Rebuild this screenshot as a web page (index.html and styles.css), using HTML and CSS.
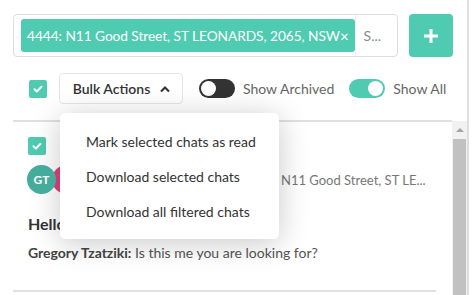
FILE: index.html
```html
<!DOCTYPE html>
<html>
<head>
<meta charset="utf-8">
<link rel="stylesheet" href="styles.css">
</head>
<body>
<div class="page">
  <div class="main">
    <div class="top">
      <div class="search">
        <span class="tag">4444: N11 Good Street, ST LEONARDS, 2065, NSW<span class="x">×</span></span>
        <span class="ph">S...</span>
      </div>
      <button class="add"><svg width="18" height="18" viewBox="0 0 18 18"><path d="M9 2v14M2 9h14" stroke="#fff" stroke-width="3" fill="none"/></svg></button>
    </div>
    <div class="controls">
      <span class="cb"><svg width="12" height="12" viewBox="0 0 12 12"><path d="M2.5 6.2l2.4 2.3 4.6-4.8" stroke="#fff" stroke-width="2" fill="none" stroke-linecap="round" stroke-linejoin="round"/></svg></span>
      <button class="bulk">Bulk Actions <svg width="12" height="8" viewBox="0 0 12 8"><path d="M2 6.5l4-4 4 4" stroke="#333" stroke-width="2" fill="none"/></svg></button>
      <span class="toggle dark"><span class="knob"></span></span>
      <span class="lbl">Show Archived</span>
      <span class="toggle on"><span class="knob"></span></span>
      <span class="lbl">Show All</span>
    </div>
    <div class="list">
      <div class="items">
        <div class="item">
          <span class="cb"><svg width="12" height="12" viewBox="0 0 12 12"><path d="M2.5 6.2l2.4 2.3 4.6-4.8" stroke="#fff" stroke-width="2" fill="none" stroke-linecap="round" stroke-linejoin="round"/></svg></span>
          <div class="meta">
            <div class="avatars"><span class="av gt">GT</span><span class="av pk"></span></div>
            <span class="addr">N11 Good Street, ST LE...</span>
          </div>
          <div class="subject">Hello</div>
          <div class="msg"><b>Gregory Tzatziki:</b> Is this me you are looking for?</div>
        </div>
      </div>
      <div class="scroll"><span class="up"></span><span class="thumb"></span></div>
    </div>
    <div class="menu">
      <div class="mi">Mark selected chats as read</div>
      <div class="mi">Download selected chats</div>
      <div class="mi">Download all filtered chats</div>
    </div>
  </div>
  <div class="edge"></div>
</div>
</body>
</html>
```
FILE: styles.css
```css
* { box-sizing: border-box; }
html, body { margin: 0; padding: 0; background: #fff; }
body { font-family: Lato, "Open Sans", sans-serif; color: #333; font-size: 14px; }
.page { display: flex; height: 295px; overflow: hidden; width: 472px; }
.main { position: relative; width: 467px; padding-left: 13px; }
.edge { width: 2px; background: #dedede; height: 295px; }
.top { display: flex; margin-top: 14px; height: 43px; gap: 11px; width: 440px; }
.search { flex: 1; border: 1px solid #ddd; border-radius: 4px; display: flex; align-items: center; padding-left: 7px; }
.tag { background: #4fcbb1; color: #fff; height: 33px; border-radius: 3px; display: flex; align-items: center; padding: 0 6px 0 6px; font-size: 13.7px; white-space: nowrap; letter-spacing: -0.05px; }
.tag .x { margin-left: 0; font-size: 15px; }
.ph { color: #888; margin-left: 0; padding-left: 8px; height: 41px; display: flex; align-items: center; border-left: 1px solid #eee; }
.add { width: 44px; height: 43px; border: 0; border-radius: 4px; background: #4fcbb1; display: flex; align-items: center; justify-content: center; padding: 0; }
.controls { display: flex; align-items: center; margin-top: 16px; height: 31px; padding-left: 16px; }
.cb { width: 18px; height: 18px; border-radius: 2px; background: #4fcbb1; display: inline-flex; align-items: center; justify-content: center; flex: none; }
.bulk { margin-left: 12px; height: 31px; width: 124px; border: 1px solid #e6e6e6; border-radius: 4px; background: #fff; font-family: inherit; font-size: 14px; font-weight: 600; color: #333; display: flex; align-items: center; justify-content: center; gap: 9px; padding: 0 0 0 2px; }
.toggle { width: 36px; height: 19px; border-radius: 10px; position: relative; margin-left: 16px; flex: none; }
.toggle .knob { position: absolute; top: 2px; width: 15px; height: 15px; border-radius: 50%; background: #fff; }
.toggle.dark { background: #333; }
.toggle.dark .knob { left: 2px; }
.toggle.on { background: #4fcbb1; margin-left: 15px; }
.toggle.on .knob { right: 2px; }
.lbl { color: #666; margin-left: 8px; font-size: 14px; }
.list { display: flex; margin-top: 16px; width: 454px; height: 175px; }
.items { flex: 1; border-top: 2px solid #e0e0e0; }
.item { margin-right: 16px; border-bottom: 2px solid #e0e0e0; padding: 15px 0 0 15px; height: 170px; }
.meta { display: flex; align-items: center; margin-top: 10px; height: 29px; }
.avatars { display: flex; width: 40px; margin-left: -1px; }
.av { width: 29px; height: 29px; border-radius: 50%; display: flex; align-items: center; justify-content: center; color: #fff; font-weight: 700; font-size: 12px; flex: none; }
.gt { background: #45ab9b; position: relative; z-index: 1; }
.pk { background: #e0437a; margin-left: -4px; }
.addr { color: #777; margin-left: 214px; white-space: nowrap; font-size: 13px; }
.subject { font-weight: 700; font-size: 16px; margin-top: 20px; }
.msg { color: #555; margin-top: 11px; }
.msg b { color: #444; }
.scroll { width: 15px; background: #f1f1f1; display: flex; flex-direction: column; align-items: center; margin-top: 1px; }
.up { width: 0; height: 0; border-left: 4px solid transparent; border-right: 4px solid transparent; border-bottom: 4px solid #a3a3a3; margin-top: 7px; }
.thumb { width: 13px; flex: 1; background: #c1c1c1; margin-top: 7px; }
.menu { position: absolute; left: 60px; top: 113px; width: 219px; height: 126px; background: #fff; border-radius: 5px; box-shadow: 0 4px 30px rgba(0,0,0,0.22); padding: 20px 0 0 26px; }
.mi { height: 35px; font-size: 14px; color: #333; line-height: 18px; }
```
